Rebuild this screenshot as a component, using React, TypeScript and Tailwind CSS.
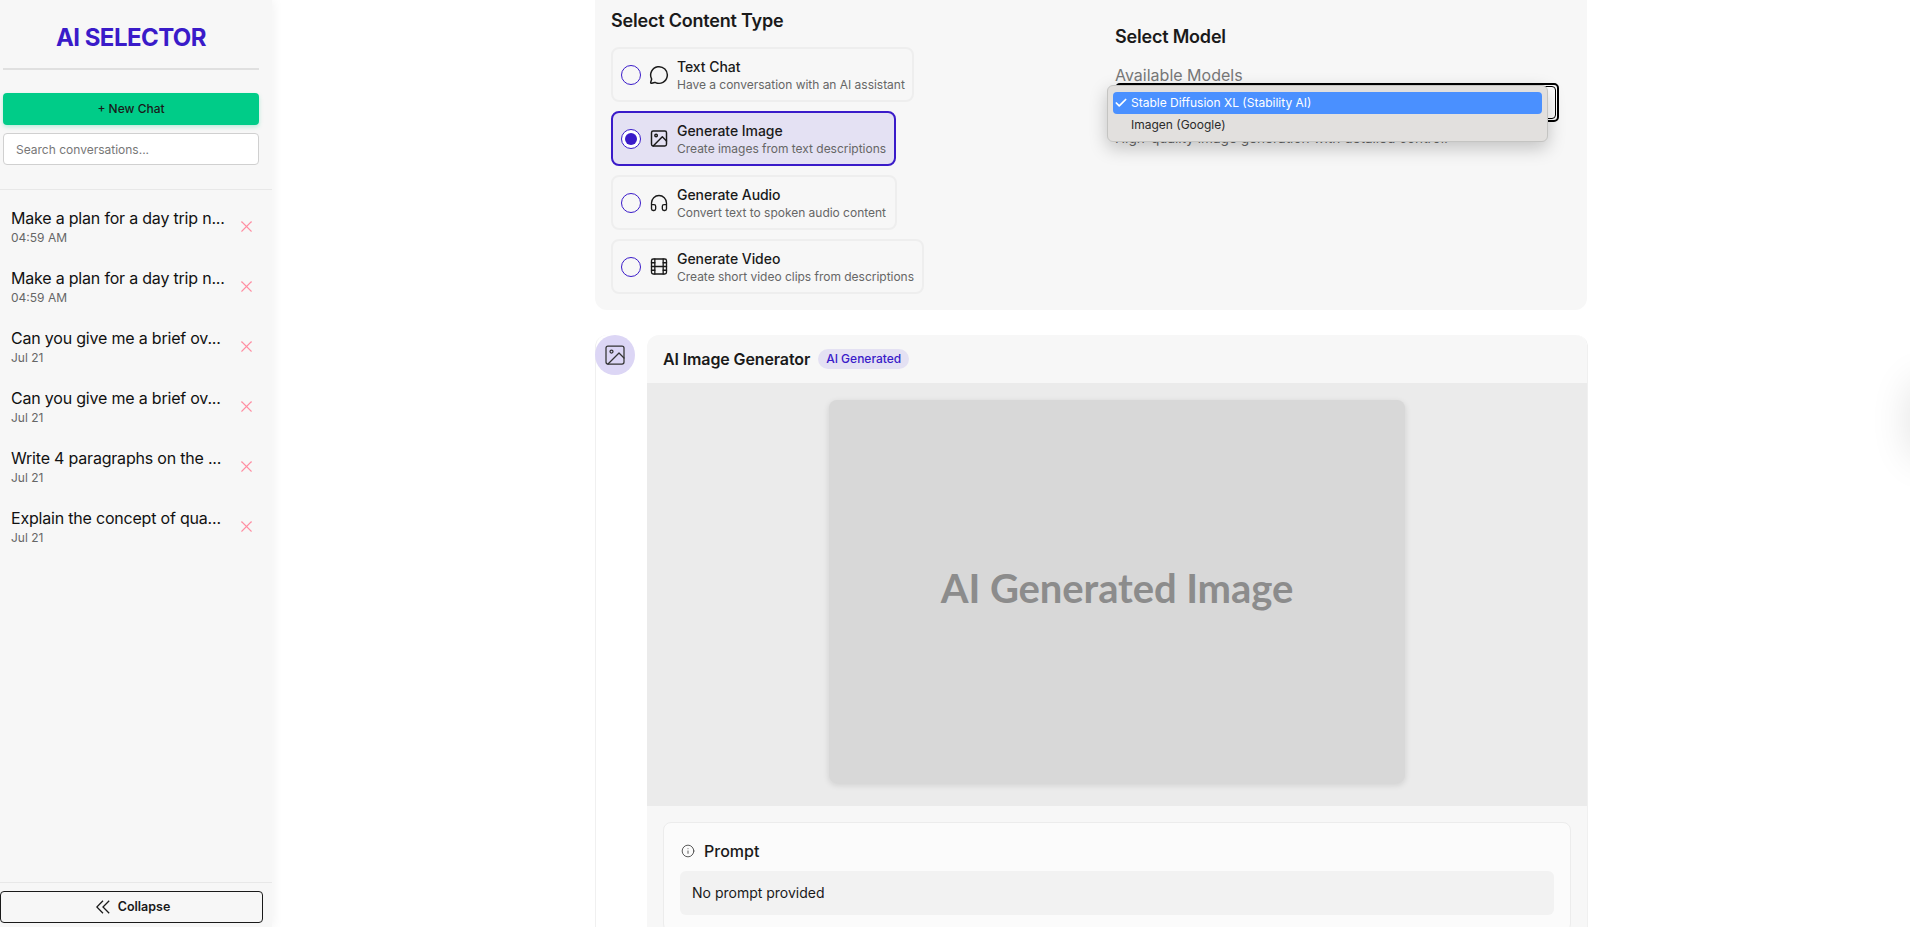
import { Check, Film, Headphones, Info, MessageCircle, X } from "lucide-react";

const chats = [
  { title: "Make a plan for a day trip n...", time: "04:59 AM" },
  { title: "Make a plan for a day trip n...", time: "04:59 AM" },
  { title: "Can you give me a brief ov...", time: "Jul 21" },
  { title: "Can you give me a brief ov...", time: "Jul 21" },
  { title: "Write 4 paragraphs on the ...", time: "Jul 21" },
  { title: "Explain the concept of qua...", time: "Jul 21" },
];

function ImageIcon({ size, strokeWidth }: { size: number; strokeWidth: number }) {
  return (
    <svg width={size} height={size} viewBox="0 0 24 24" fill="none" stroke="currentColor" strokeWidth={strokeWidth} strokeLinecap="round" strokeLinejoin="round">
      <rect x="3" y="3" width="18" height="18" rx="2" />
      <circle cx="8.5" cy="8.5" r="1.5" />
      <polyline points="21 15 16 10 5 21" />
    </svg>
  );
}

const contentTypes = [
  { name: "Text Chat", desc: "Have a conversation with an AI assistant", icon: <MessageCircle size={20} strokeWidth={1.75} />, width: "w-[303px]" },
  { name: "Generate Image", desc: "Create images from text descriptions", icon: <ImageIcon size={23} strokeWidth={1.75} />, width: "w-[285px]", active: true },
  { name: "Generate Audio", desc: "Convert text to spoken audio content", icon: <Headphones size={22} strokeWidth={1.6} />, width: "w-[286px]" },
  { name: "Generate Video", desc: "Create short video clips from descriptions", icon: <Film size={23} strokeWidth={1.6} />, width: "w-[313px]" },
];

function Sidebar() {
  return (
    <aside className="w-[272px] shrink-0 h-full flex flex-col bg-[#f7f7f7] shadow-[2px_0_10px_rgba(0,0,0,0.05)]">
      <div className="pl-[3px] pr-[13px]">
        <h1 className="h-[70px] pt-[21px] border-b-2 border-[#e0e0e0] text-center text-[24px] leading-[34px] font-bold tracking-[-0.55px] text-[#3a1bc9]">AI SELECTOR</h1>
        <button className="mt-[23px] w-full h-[32px] rounded bg-[#00cc88] text-[12px] font-medium text-[#1a1a1a] shadow-[0_2px_4px_rgba(0,204,136,0.25)]">+ New Chat</button>
        <div className="mt-[8px] h-[32px] rounded border border-[#d0d0d0] bg-white pl-[12px] text-[12px] leading-[31px] text-[#777777]">Search conversations...</div>
      </div>
      <div className="mt-[24px] border-t border-[#e8e8e8] pt-[6px] flex-1">
        {chats.map((chat, i) => (
          <div key={i} className="h-[60px] pl-[11px] pr-[16px] flex items-center justify-between">
            <div className="-mt-[2px]">
              <div className="text-[16px] leading-[26px] tracking-[-0.2px] text-[#111111]">{chat.title}</div>
              <div className="text-[12px] leading-[14px] text-[#666666]">{chat.time}</div>
            </div>
            <X size={19} strokeWidth={1.4} className="text-[#ff8fa3]" />
          </div>
        ))}
      </div>
      <div className="border-t border-[#e8e8e8] pt-[8px] pb-[4px] pr-[9px]">
        <button className="w-full h-[32px] pl-[3px] rounded border border-[#1a1a1a] flex items-center justify-center gap-[8px] text-[12.5px] font-semibold text-[#1a1a1a]">
          <svg width="14" height="14" viewBox="0 0 14 14" fill="none" stroke="currentColor" strokeWidth="1.3">
            <path d="M7 0.8 L0.8 7 L7 13.2 M13.2 0.8 L7 7 L13.2 13.2" />
          </svg>
          Collapse
        </button>
      </div>
    </aside>
  );
}

function Selector() {
  return (
    <section className="h-[310px] rounded-b-xl bg-[#f7f7f7] pl-[16px] flex">
      <div className="w-[504px]">
        <h2 className="pt-[9px] text-[18px] leading-[24px] font-semibold tracking-[-0.2px] text-[#1a1a1a]">Select Content Type</h2>
        <div className="mt-[14px] flex flex-col gap-[9px]">
          {contentTypes.map((t) => (
            <div
              key={t.name}
              className={`${t.width} h-[55px] rounded-lg border-2 pl-[8px] flex items-center ${t.active ? "border-[#3a1bc9] bg-[#e4e1f3]" : "border-[#eeeeee]"}`}
            >
              <span className={`w-[20px] h-[20px] rounded-full border border-[#3a1bc9] flex items-center justify-center ${t.active ? "bg-white" : ""}`}>
                {t.active && <span className="w-[12px] h-[12px] rounded-full bg-[#3a1bc9]" />}
              </span>
              <span className="ml-[8px] w-[20px] flex justify-center text-[#1a1a1a]">{t.icon}</span>
              <div className="ml-[8px]">
                <div className="text-[14px] leading-[20px] font-medium tracking-[-0.05px] text-[#1a1a1a]">{t.name}</div>
                <div className="text-[12px] leading-[15px] tracking-[-0.02px] text-[#666666] whitespace-nowrap">{t.desc}</div>
              </div>
            </div>
          ))}
        </div>
      </div>
      <div className="relative w-[443px]">
        <h2 className="pt-[25px] text-[18px] leading-[24px] font-semibold tracking-[-0.2px] text-[#1a1a1a]">Select Model</h2>
        <div className="mt-[14px] text-[16px] leading-[24px] text-[#777777]">Available Models</div>
        <div className="-mt-[4px] h-[39px] w-[444px] rounded-[5px] border-2 border-black bg-white p-[1px]">
          <div className="h-full rounded-sm border border-black" />
        </div>
        <div className="mt-[6px] text-[13.6px] leading-[20px] text-[#666666]">High-quality image generation with detailed control.</div>
        <div className="absolute left-[-8px] top-[85px] w-[441px] h-[57px] rounded-md border border-[#c4c4c2] bg-[#e2e0de] p-[5px] pt-[6px] shadow-[0_6px_18px_rgba(0,0,0,0.22)] text-[12px]">
          <div className="h-[22px] rounded bg-[#4a90ff] text-white flex items-center">
            <Check size={14} strokeWidth={3} className="ml-[1px]" />
            <span className="ml-[3px]">Stable Diffusion XL (Stability AI)</span>
          </div>
          <div className="h-[22px] pl-[18px] text-[#2a2a2a] flex items-center">Imagen (Google)</div>
        </div>
      </div>
    </section>
  );
}

function ImageMessage() {
  return (
    <section className="mt-[25px] -mr-px border-l border-r border-[#f0f0f0] rounded-t-xl flex gap-[12px]">
      <div className="w-[40px] h-[40px] rounded-full bg-[#dcd6f5] flex items-center justify-center text-[#333333] -ml-px shrink-0">
        <ImageIcon size={24} strokeWidth={1.25} />
      </div>
      <div className="flex-1 rounded-t-xl bg-[#f7f7f7] overflow-hidden">
        <div className="h-[48px] pl-[16px] flex items-center gap-[8px]">
          <span className="text-[16px] font-semibold tracking-[-0.12px] text-[#1a1a1a]">AI Image Generator</span>
          <span className="h-[20px] px-[8px] rounded-full bg-[#e4e1f3] text-[12px] leading-[20px] font-medium text-[#3a1bc9]">AI Generated</span>
        </div>
        <div className="h-[423px] bg-[#ebebeb] flex items-center justify-center pb-[6px]">
          <div className="w-[576px] h-[383px] rounded-lg bg-[#d8d8d8] shadow-[0_2px_6px_rgba(0,0,0,0.12)] flex items-center justify-center pb-[7px] font-['Lato'] text-[40px] tracking-[-0.1px] font-bold text-[#8c8c8c]">
            AI Generated Image
          </div>
        </div>
        <div className="p-[16px]">
          <div className="rounded-lg border border-[#ececec] bg-[#fbfbfb] px-[16px] pt-[16px] pb-[16px]">
            <div className="flex items-center gap-[8px] h-[24px] pl-[1px]">
              <Info size={14} strokeWidth={1.5} className="text-[#444444]" />
              <span className="ml-[1px] text-[16px] font-medium text-[#1a1a1a]">Prompt</span>
            </div>
            <div className="mt-[8px] h-[44px] rounded-md bg-[#f2f2f2] pl-[12px] text-[14px] leading-[44px] text-[#1a1a1a]">No prompt provided</div>
          </div>
        </div>
      </div>
    </section>
  );
}

export default function App() {
  return (
    <div className="relative w-full h-[927px] flex overflow-hidden bg-white font-['Inter',sans-serif]">
      <Sidebar />
      <main className="flex-1 min-w-0 flex justify-center">
        <div className="w-[992px] shrink-0">
          <Selector />
          <ImageMessage />
        </div>
      </main>
      <div className="absolute right-[-40px] top-[380px] w-[40px] h-[80px] rounded-full shadow-[0_0_40px_rgba(0,0,0,0.12)]" />
    </div>
  );
}
